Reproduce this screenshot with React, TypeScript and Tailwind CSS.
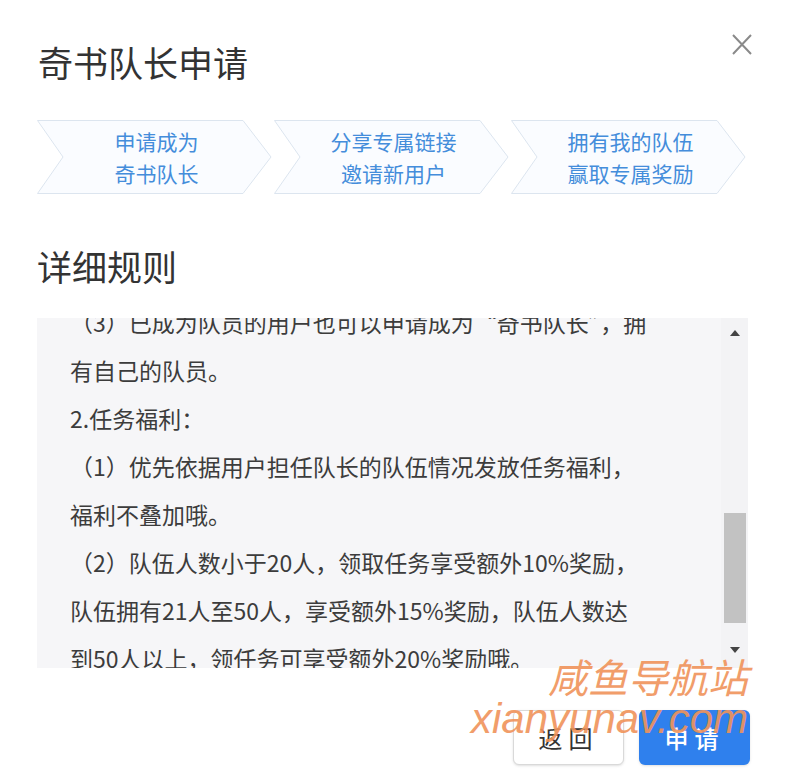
import React from 'react';

const steps = [
  ['申请成为', '奇书队长'],
  ['分享专属链接', '邀请新用户'],
  ['拥有我的队伍', '赢取专属奖励'],
];

const rules = [
  '（3）已成为队员的用户也可以申请成为“奇书队长”，拥',
  '有自己的队员。',
  '2.任务福利：',
  '（1）优先依据用户担任队长的队伍情况发放任务福利，',
  '福利不叠加哦。',
  '（2）队伍人数小于20人，领取任务享受额外10%奖励，',
  '队伍拥有21人至50人，享受额外15%奖励，队伍人数达',
  '到50人以上，领任务可享受额外20%奖励哦。',
];

const Step = ({ lines }: { lines: string[] }) => (
  <div className="relative w-[235px] h-[74px]">
    <svg className="absolute inset-0" width="235" height="74" viewBox="0 0 235 74">
      <polygon
        points="0.5,0.5 206,0.5 234,37 206,73.5 0.5,73.5 26,37"
        fill="#fafcff"
        stroke="#dce5ef"
        strokeWidth="1"
      />
    </svg>
    <div className="relative flex flex-col items-center justify-center h-full pl-[4px] text-[21px] leading-[32px] text-[#448ddb]">
      {lines.map((l) => (
        <span key={l}>{l}</span>
      ))}
    </div>
  </div>
);

const App = () => {
  return (
    <div
      className="relative w-[786px] h-[772px] bg-white overflow-hidden"
      style={{ fontFamily: '"Noto Sans CJK SC", "Noto Sans", sans-serif' }}
    >
      {/* header */}
      <div className="flex justify-between items-start pl-[38px] pr-[34px] pt-[34px]">
        <h1 className="mt-[6px] text-[35px] leading-[44px] text-[#333]">奇书队长申请</h1>
        <svg width="20" height="21" viewBox="0 0 20 21" className="text-[#8a8a8a]">
          <path d="M1 1 L19 20 M19 1 L1 20" stroke="currentColor" strokeWidth="2" fill="none" />
        </svg>
      </div>

      {/* steps */}
      <div className="flex gap-[2px] pl-[37px] mt-[36px]">
        {steps.map((s, i) => (
          <Step key={i} lines={s} />
        ))}
      </div>

      <h2 className="pl-[37px] mt-[50px] text-[35px] leading-[44px] text-[#333]">详细规则</h2>

      {/* rules box */}
      <div className="flex ml-[37px] mt-[30px] w-[711px] h-[350px] bg-[#f6f6f8]">
        <div className="flex-1 overflow-hidden pl-[33px]">
          <div className="-mt-[20px] text-[23px] leading-[48px] text-[#3c3c3c]">
            {rules.map((r, i) => (
              <div key={i} className="whitespace-nowrap">
                {r}
              </div>
            ))}
          </div>
        </div>
        <div className="flex flex-col w-[27px] bg-[#f3f3f5]">
          <div className="flex justify-center items-center h-[30px]">
            <div className="w-0 h-0 border-l-[5px] border-r-[5px] border-b-[6px] border-l-transparent border-r-transparent border-b-[#444]" />
          </div>
          <div className="flex-1 flex justify-center">
            <div className="mt-[165px] w-[22px] h-[110px] bg-[#c2c2c2]" />
          </div>
          <div className="flex justify-center items-center h-[36px]">
            <div className="w-0 h-0 border-l-[5px] border-r-[5px] border-t-[6px] border-l-transparent border-r-transparent border-t-[#444]" />
          </div>
        </div>
      </div>

      {/* buttons */}
      <div className="flex justify-end gap-[15px] pr-[36px] mt-[42px]">
        <button className="w-[111px] h-[55px] rounded-[6px] border border-[#d9d9d9] bg-white text-[24px] tracking-[6px] text-[#333] shadow-sm">
          返回
        </button>
        <button className="w-[111px] h-[55px] rounded-[6px] bg-[#2f80ed] text-[24px] tracking-[6px] text-white font-medium shadow-sm">
          申请
        </button>
      </div>

      {/* watermark */}
      <div className="absolute right-[38px] top-[652px] flex flex-col items-end pointer-events-none text-[#f0935a] opacity-90 italic">
        <span className="text-[40px] leading-[48px]">咸鱼导航站</span>
        <span
          className="-mt-[4px] text-[42px] leading-[46px]"
          style={{ fontFamily: '"Liberation Sans", sans-serif' }}
        >
          xianyunav.com
        </span>
      </div>
    </div>
  );
};

export default App;
